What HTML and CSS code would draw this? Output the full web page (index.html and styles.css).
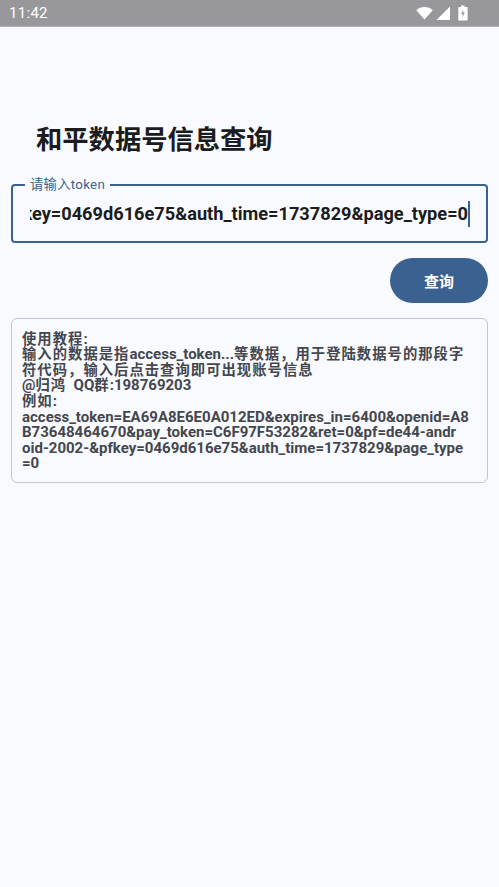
FILE: index.html
```html
<!DOCTYPE html>
<html lang="zh-CN">
<head>
<meta charset="utf-8">
<title>和平数据号信息查询</title>
<link rel="stylesheet" href="styles.css">
</head>
<body>
<div class="status">
  <span class="time">11:42</span>
  <div class="status-icons">
    <svg class="wifi" width="17" height="14" viewBox="0 0 17 14"><path d="M0.3 4.2C2.5 2.2 5.3 1 8.5 1s6 1.2 8.2 3.2L8.5 13.6z" fill="#fff"/></svg>
    <svg class="signal" width="14" height="14" viewBox="0 0 14 14"><path d="M14 0.5V14H0.5z" fill="#fff"/></svg>
    <svg class="battery" width="10" height="16" viewBox="0 0 10 16"><path d="M3 0.5h3.6v1.5H9a.6.6 0 0 1 .6.6V15a.6.6 0 0 1-.6.6H.9a.6.6 0 0 1-.6-.6V2.6A.6.6 0 0 1 .9 2H3z" fill="#fff"/><path d="M5.4 4.5L3 9h1.7l-.4 3.4L6.9 7.6H5.1z" fill="#98979b"/></svg>
  </div>
</div>
<main class="page">
  <h1 class="title">和平数据号信息查询</h1>
  <div class="field">
    <span class="field-label">请输入token</span>
    <div class="field-value"><span class="value-text">access_token=EA69A8E6E0A012ED&amp;expires_in=6400&amp;openid=A8B73648464670&amp;pay_token=C6F97F53282&amp;ret=0&amp;pf=de44-android-2002-&amp;pfkey=0469d616e75&amp;auth_time=1737829&amp;page_type=0</span></div>
  </div>
  <div class="actions"><button class="query" type="button">查询</button></div>
  <section class="help">
    <div><span class="zh">使用教程</span>:</div>
    <div><span class="zh">输入的数据是指</span>access_token...<span class="zh">等数据，用于登陆数据号的那段字</span></div>
    <div><span class="zh">符代码，输入后点击查询即可出现账号信息</span></div>
    <div>@<span class="zh">归鸿</span>&nbsp; QQ<span class="zh">群</span>:198769203</div>
    <div><span class="zh">例如</span>:</div>
    <div>access_token=EA69A8E6E0A012ED&amp;expires_in=6400&amp;openid=A8</div>
    <div>B73648464670&amp;pay_token=C6F97F53282&amp;ret=0&amp;pf=de44-andr</div>
    <div>oid-2002-&amp;pfkey=0469d616e75&amp;auth_time=1737829&amp;page_type</div>
    <div>=0</div>
  </section>
</main>
</body>
</html>
```
FILE: styles.css
```css
* { box-sizing: border-box; }
html, body { margin: 0; padding: 0; }
body {
  width: 499px;
  height: 887px;
  overflow: hidden;
  background: #f9faff;
  font-family: "Roboto", "Noto Sans CJK SC", sans-serif;
}
.status {
  height: 27px;
  background: #98979b;
  border-bottom: 1px solid #b4b4b8;
  display: flex;
  align-items: center;
  justify-content: space-between;
  padding: 0 31px 0 9px;
  color: #fff;
}
.time { font-family: "Roboto", sans-serif; font-size: 15px; letter-spacing: 0.3px; }
.status-icons { display: flex; align-items: center; gap: 3px; }
.signal { margin-right: 5px; }
.page { padding: 0 11px; }
.title {
  margin: 96px 0 0 25px;
  font-size: 26.3px;
  line-height: 34px;
  font-weight: 700;
  color: #1a1c20;
}
.field {
  position: relative;
  margin-top: 27px;
  height: 59px;
  border: 2px solid #3a6190;
  border-radius: 4px;
  padding: 0 16px 0 17px;
  display: flex;
  align-items: center;
}
.field-label {
  position: absolute;
  left: 12px;
  top: -9px;
  padding: 0 5px;
  background: #f9faff;
  font-size: 13.3px;
  line-height: 16px;
  color: #3a6190;
  letter-spacing: 0.3px;
}
.field-value {
  flex: 1;
  min-width: 0;
  overflow: hidden;
  display: flex;
  justify-content: flex-end;
  white-space: nowrap;
}
.value-text {
  flex: none;
  font-size: 18.2px;
  font-weight: 700;
  line-height: 26px;
  color: #1a1c20;
  border-right: 2px solid #3a6190;
}
.actions { display: flex; justify-content: flex-end; margin-top: 15px; }
.query {
  width: 98px;
  height: 45px;
  border: 0;
  border-radius: 23px;
  background: #3a6190;
  color: #fff;
  font-family: inherit;
  font-size: 15px;
  font-weight: 700;
}
.help {
  margin-top: 15px;
  height: 165px;
  border: 1px solid #c5c6cc;
  border-radius: 6px;
  padding: 12.6px 10px 0;
  font-size: 15px;
  line-height: 15.6px;
  font-weight: 700;
  color: #44474d;
  white-space: nowrap;
}
.zh {
  font-size: 14.3px;
  letter-spacing: 1.05px;
}
```
